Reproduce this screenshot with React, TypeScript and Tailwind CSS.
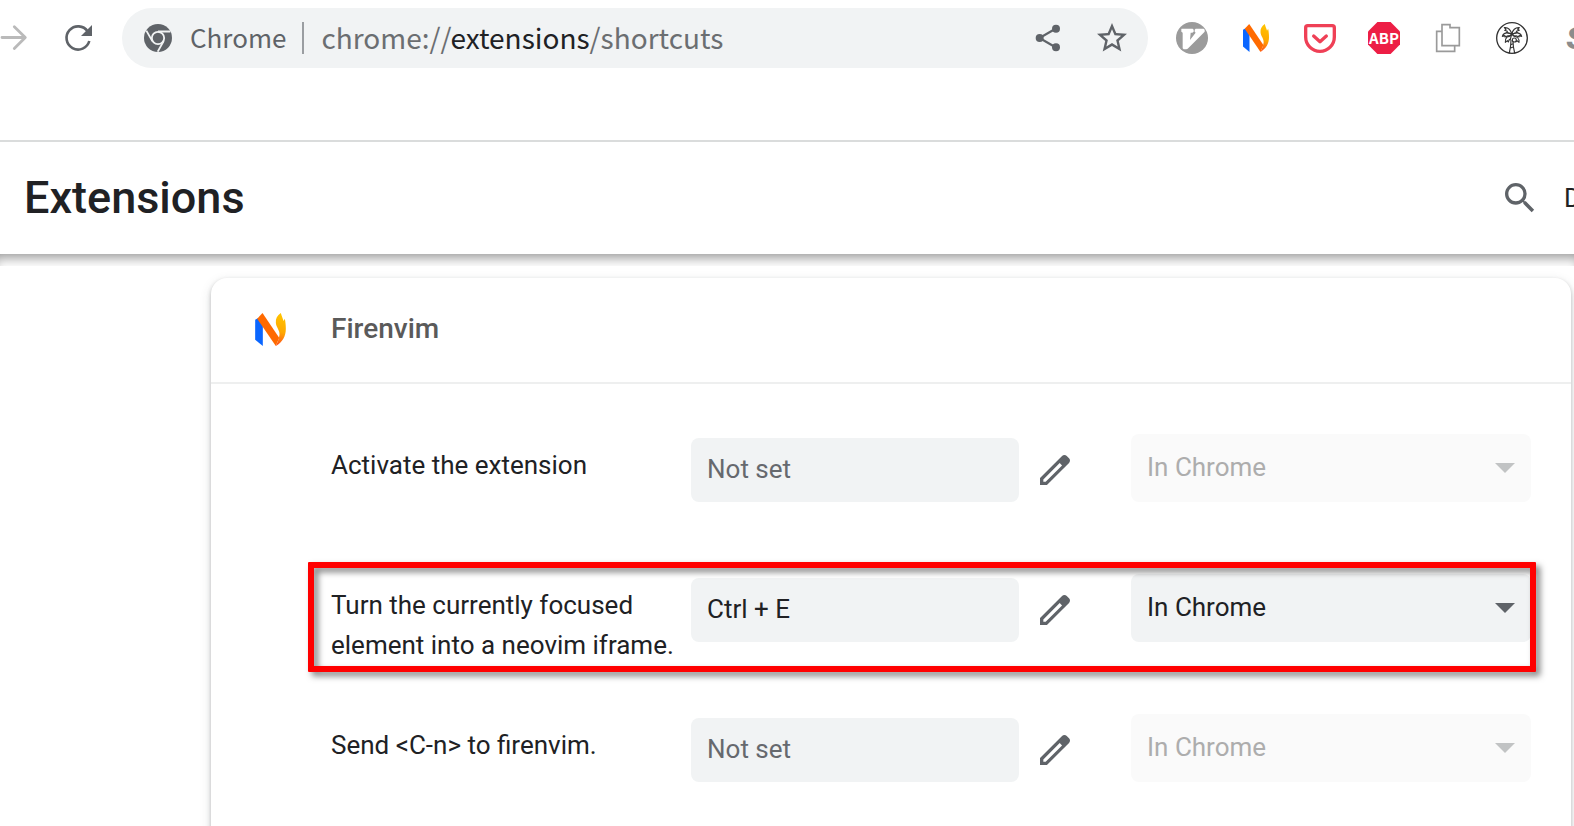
import React from 'react';

type Shortcut = {
  id: string;
  label: string;
  keys: string;
  highlighted?: boolean;
};

const SHORTCUTS: Shortcut[] = [
  { id: 'activate', label: 'Activate the extension', keys: '' },
  { id: 'turn-focused', label: 'Turn the currently focused element into a neovim iframe.', keys: 'Ctrl + E', highlighted: true },
  { id: 'send-c-n', label: 'Send <C-n> to firenvim.', keys: '' },
];

function ForwardIcon() {
  return (
    <svg className="w-7 h-8" viewBox="0 0 28 32" fill="none" stroke="#bababa" strokeWidth="2.8" strokeLinecap="round" strokeLinejoin="round">
      <path d="M2 15.5h23M14.3 4.7 25.3 15.5 14.3 26.6" />
    </svg>
  );
}

function ReloadIcon() {
  return (
    <svg className="w-7 h-8" viewBox="0 0 28 32">
      <path d="M23.7 9.4A11.6 11.6 0 1 0 25.3 19" fill="none" stroke="#5f6368" strokeWidth="2.6" />
      <path d="M28 3v11H17z" fill="#5f6368" />
    </svg>
  );
}

function ChromeIcon() {
  return (
    <svg className="w-7 h-7 shrink-0" viewBox="0 0 84 84">
      <circle cx="42" cy="42" r="42" fill="#5f6368" />
      <circle cx="42" cy="42" r="18.5" fill="none" stroke="#f1f3f4" strokeWidth="5.5" />
      <path d="M42 22.5h37M25 51.5 7 20M59 51.5 41 83" fill="none" stroke="#f1f3f4" strokeWidth="5.5" />
    </svg>
  );
}

function ShareIcon() {
  return (
    <svg className="w-7 h-8" viewBox="0 0 28 32" fill="#5f6368">
      <path d="M21.5 6.7 5.5 16l16 9.3" fill="none" stroke="#5f6368" strokeWidth="2.2" />
      <circle cx="5.7" cy="16" r="4" />
      <circle cx="22" cy="6.7" r="4" />
      <circle cx="22" cy="25.3" r="4" />
    </svg>
  );
}

function StarIcon() {
  return (
    <svg className="w-9 h-9" viewBox="0 0 24 24" fill="#5f6368">
      <path d="M22 9.24l-7.19-.62L12 2 9.19 8.63 2 9.24l5.46 4.73L5.82 21 12 17.27 18.18 21l-1.63-7.03L22 9.24zM12 15.4l-3.76 2.27 1-4.28-3.32-2.88 4.38-.38L12 6.1l1.71 4.04 4.38.38-3.32 2.88 1 4.28L12 15.4z" />
    </svg>
  );
}

function VimIcon() {
  return (
    <svg className="w-8 h-8" viewBox="0 0 96 96">
      <circle cx="48" cy="48" r="48" fill="#9b9b9b" />
      <path d="M17 20h33l3 3v6l-4 3h-5l-2 22 17-22-3-3v-6l3-3h24l3 3v6L35 80l-4 2h-8l-3-3V32l-4-3v-8z" fill="#fff" />
    </svg>
  );
}

function FirenvimIcon({ className, id }: { className: string; id: string }) {
  return (
    <svg className={className} viewBox="0 0 92 99">
      <defs>
        <linearGradient id={id} x1="0.3" y1="0" x2="0.2" y2="1">
          <stop offset="0" stopColor="#ffc400" />
          <stop offset="0.55" stopColor="#ffa800" />
          <stop offset="1" stopColor="#ff4b1e" />
        </linearGradient>
      </defs>
      <path d="M0 20 8 16 23 36V99L0 80z" fill="#0a66ff" />
      <path d="M77 0C66 8 61 17 62 29c1 14 12 22 11 36-1 13-7 23-11 34 20-13 30-29 30-52 0-11-1-20-3-30l-4 7C83 15 79 9 77 0z" fill={`url(#${id})`} />
      <path d="M6 17 22 0 72 74 62 99z" fill="#ff6a00" />
    </svg>
  );
}

function PocketIcon() {
  return (
    <svg className="w-8 h-8" viewBox="0 0 96 96" fill="none" stroke="#ef4056" strokeLinecap="round" strokeLinejoin="round">
      <path d="M11 11h74a6 6 0 0 1 6 6v28a43 43 0 0 1-86 0V17a6 6 0 0 1 6-6z" strokeWidth="10" />
      <path d="M29 42 48 59 67 42" strokeWidth="10" />
    </svg>
  );
}

function AbpIcon() {
  return (
    <svg className="w-8 h-8" viewBox="0 0 32 32">
      <path d="M9.4 0h13.2L32 9.4v13.2L22.6 32H9.4L0 22.6V9.4z" fill="#ed1e45" />
      <text x="16" y="22" textAnchor="middle" fill="#fff" className="font-['Noto_Sans_CJK_SC',sans-serif] text-[15px] font-bold">ABP</text>
    </svg>
  );
}

function CopyIcon() {
  return (
    <svg className="w-8 h-8" viewBox="0 0 96 96" fill="#fff" stroke="#9a9a9a" strokeWidth="5">
      <path d="M14 28h54v60H14z" />
      <path d="M30 20V8h24v9h28v54H30z" />
    </svg>
  );
}

function PalmIcon() {
  return (
    <svg className="w-8 h-8" viewBox="0 0 96 96" fill="none" stroke="#333" strokeWidth="3.4" strokeLinejoin="round" strokeLinecap="round">
      <circle cx="48" cy="48" r="46" strokeWidth="4" />
      <path d="M45 55C45 70 43 80 40 93M51 58c0 12 2 23 5 35M44 68l7-3M43 78l9-3" />
      <path d="M47 36C44 24 36 16 25 17l5 5-4 3 8 3-2 4 15 4zM48 36c1-12 10-20 22-19l-5 5 5 3-9 3 3 4-16 4z" />
      <path d="M47 38C37 29 23 31 19 43l8-2v4l9-4 2 3 9-6zM49 38c9-9 24-7 28 5l-8-2v4l-9-4-2 3-9-6z" />
      <path d="M46 40C35 41 26 49 28 61l6-5 3 4 3-8 3 1 3-13zM51 41c11 2 20 9 18 20l-6-5-3 3" />
      <circle cx="55" cy="54" r="6" fill="#fff" />
    </svg>
  );
}

function SearchIcon() {
  return (
    <svg className="w-10 h-10" viewBox="0 0 24 24" fill="#5f6368">
      <path d="M15.5 14h-.79l-.28-.27A6.471 6.471 0 0 0 16 9.5 6.5 6.5 0 1 0 9.5 16c1.61 0 3.09-.59 4.23-1.57l.27.28v.79l5 4.99L20.49 19l-4.99-5zm-6 0C7.01 14 5 11.99 5 9.5S7.01 5 9.5 5 14 7.01 14 9.5 11.99 14 9.5 14z" />
    </svg>
  );
}

function EditIcon() {
  return (
    <svg className="w-10 h-10" viewBox="0 0 24 24" fill="#5f6368">
      <path d="M20.41 4.94l-1.35-1.35c-.78-.78-2.05-.78-2.83 0L3 16.82V21h4.18L20.41 7.77c.79-.78.79-2.05 0-2.83zm-14 14.12L5 19v-1.36l9.82-9.82 1.41 1.41-9.82 9.83z" />
    </svg>
  );
}

const EXTENSIONS = [
  { name: 'Vimium', icon: <VimIcon /> },
  { name: 'Firenvim', icon: <FirenvimIcon className="w-[26px] h-7" id="flame-toolbar" /> },
  { name: 'Pocket', icon: <PocketIcon /> },
  { name: 'Adblock Plus', icon: <AbpIcon /> },
  { name: 'Copy', icon: <CopyIcon /> },
  { name: 'Palm', icon: <PalmIcon /> },
];

function BrowserToolbar() {
  return (
    <div className="flex items-start pt-2 pb-[72px] border-b-2 border-[#dadcdc]">
      <div className="flex items-center h-[60px] shrink-0 w-[122px] gap-9">
        <button type="button" aria-label="Forward"><ForwardIcon /></button>
        <button type="button" aria-label="Reload"><ReloadIcon /></button>
      </div>

      {/* Address bar */}
      <div className="flex flex-1 items-center h-[60px] pl-[22px] pr-[18px] rounded-full bg-[#f1f3f4] font-['Noto_Sans_CJK_SC',sans-serif] leading-10 whitespace-nowrap">
        <ChromeIcon />
        <span className="ml-[18px] pb-[2px] text-[26px] text-[#5f6368]">Chrome</span>
        <span className="ml-4 w-[2px] h-8 bg-[#9a9da1]" />
        <span className="ml-[17px] pb-[2px] flex-1 text-[28px] text-[#6b6e71]">
          chrome://<span className="text-[#202124]">extensions</span>/shortcuts
        </span>
        <button type="button" aria-label="Share"><ShareIcon /></button>
        <button type="button" aria-label="Bookmark" className="ml-8"><StarIcon /></button>
      </div>

      {/* Extension buttons, running off the right edge */}
      <div className="flex items-center h-[60px] ml-3 w-[414px] shrink-0 overflow-hidden">
        {EXTENSIONS.map((ext) => (
          <button key={ext.name} type="button" aria-label={ext.name} className="flex items-center justify-center w-16 h-full shrink-0">
            {ext.icon}
          </button>
        ))}
        <button type="button" className="w-16 h-full shrink-0 font-[Roboto,sans-serif] text-[32px] font-black italic text-[#8c8c8c]">S</button>
      </div>
    </div>
  );
}

function ShortcutRow({ shortcut }: { shortcut: Shortcut }) {
  const { id, label, keys, highlighted } = shortcut;
  return (
    <li className="relative flex items-start min-h-[140px] pl-[120px] pr-10 text-[26px]">
      <label htmlFor={`${id}-keys`} className="flex-1 pt-[11px] leading-10 text-[#202124]">
        {label}
      </label>
      <input
        id={`${id}-keys`}
        type="text"
        readOnly
        value={keys}
        placeholder="Not set"
        className="mt-1 w-[328px] h-16 px-4 pb-[2px] rounded-lg bg-[#f1f3f4] text-[#202124] placeholder:text-[#66696e] outline-none"
      />
      <button type="button" aria-label={`Edit shortcut ${label}`} className="mt-1 flex items-center justify-center w-[72px] h-16 shrink-0">
        <EditIcon />
      </button>
      <div className="relative ml-10 w-[400px] shrink-0">
        <select
          aria-label={`Scope for ${label}`}
          disabled={!highlighted}
          className="block w-full h-[68px] px-4 pb-[2px] rounded-lg appearance-none bg-[#f1f3f4] text-[#202124] disabled:bg-[#fafafa] disabled:text-[#adadad] disabled:opacity-100"
        >
          <option>In Chrome</option>
        </select>
        <svg className="absolute right-4 top-[29px] w-5 h-[10px] pointer-events-none" viewBox="0 0 20 10">
          <path d="M0 0h20L10 10z" fill={highlighted ? '#5f6368' : '#c1c3c4'} />
        </svg>
      </div>
      {highlighted && (
        <div className="absolute left-[97px] right-[35px] -top-3 bottom-[42px] border-6 border-[#ff0000] rounded-[1px] pointer-events-none [filter:drop-shadow(4px_4px_3px_rgba(0,0,0,0.5))]" />
      )}
    </li>
  );
}

export default function App() {
  return (
    <div className="flex flex-col h-screen overflow-hidden bg-white font-[Roboto,sans-serif]">
      <BrowserToolbar />

      <header className="flex items-center justify-between h-28 shrink-0 pl-6">
        <h1 className="text-[45px] leading-[52px] font-medium text-[#202124]">Extensions</h1>
        <div className="flex items-center gap-6 w-[74px] overflow-hidden">
          <button type="button" aria-label="Search" className="shrink-0"><SearchIcon /></button>
          <span className="shrink-0 whitespace-nowrap text-[26px] text-[#202124]">Developer mode</span>
        </div>
      </header>

      <main className="flex flex-col flex-1 overflow-hidden">
        <div className="h-3 shrink-0 shadow-[inset_0_10px_12px_-6px_rgba(0,0,0,0.4)]" />
        <section className="flex-1 mt-3 ml-[211px] mr-[3px] rounded-t-2xl bg-white shadow-[0_2px_4px_rgba(60,64,67,0.3),0_4px_12px_rgba(60,64,67,0.15)]">
          <div className="flex items-center h-[106px] pl-11 pb-[2px] border-b-2 border-[#eeefef]">
            <FirenvimIcon className="w-[31px] h-[33px]" id="flame-card" />
            <h2 className="ml-[45px] text-[28px] leading-10 font-medium text-[#5a5a5a]">Firenvim</h2>
          </div>
          <ul className="pt-[50px]">
            {SHORTCUTS.map((shortcut) => (
              <ShortcutRow key={shortcut.id} shortcut={shortcut} />
            ))}
          </ul>
        </section>
      </main>
    </div>
  );
}
